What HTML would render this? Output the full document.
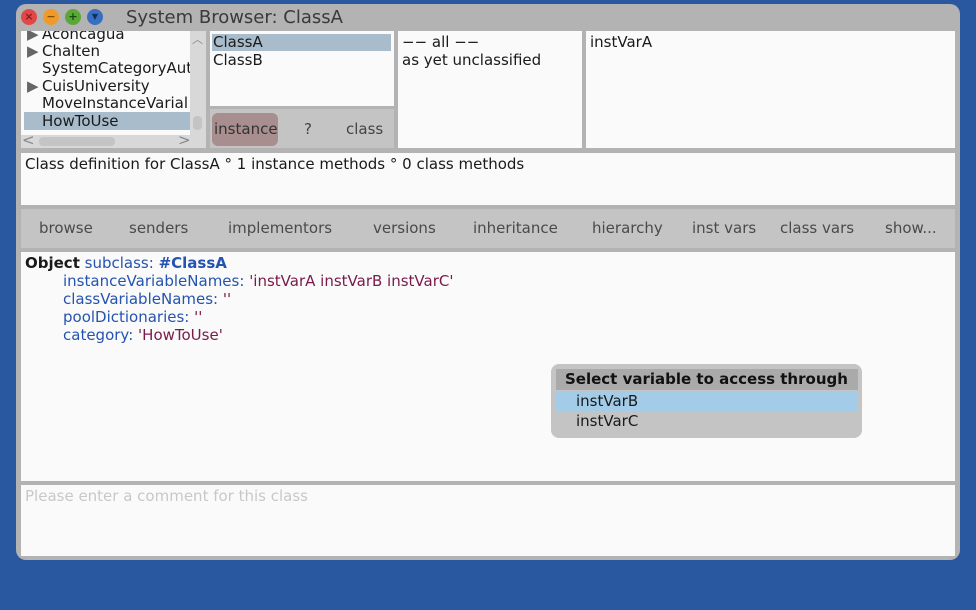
<!DOCTYPE html>
<html><head><style>
*{margin:0;padding:0;box-sizing:border-box}
body{width:976px;height:610px;background:#2a58a0;font-family:"DejaVu Sans","Liberation Sans",sans-serif;font-size:15px;color:#1a1a1a;position:relative;overflow:hidden}
.a{position:absolute}
.w{background:#fafafa}
.win{left:16px;top:4px;width:944px;height:556px;background:#b3b3b3;border-radius:10px}
.dot{width:16px;height:16px;border-radius:50%;top:9px;font-size:11px;line-height:16px;text-align:center;font-weight:bold}
.t{position:absolute;white-space:nowrap;line-height:18px}
.btn{top:219px;color:#4a4a4a;font-size:15px}
.b{color:#2553b0}.s{color:#7a1a4a}
</style></head><body>
<div class="a win"></div>
<div class="a dot" style="left:21px;background:#e04848;color:#8a1a1a">×</div>
<div class="a dot" style="left:43px;background:#ef9b2a;color:#8a4a00">−</div>
<div class="a dot" style="left:65px;background:#5aa838;color:#1a4a10">+</div>
<div class="a dot" style="left:87px;background:#3a6ec0;color:#10305a;font-size:8px">▼</div>
<div class="t" style="left:126px;top:7px;font-size:18px;line-height:22px;color:#3a3a3a">System Browser: ClassA</div>

<!-- pane 1 -->
<div class="a w" style="left:21px;top:31px;width:169px;height:104px;overflow:hidden">
<div class="a" style="left:3px;top:81px;width:166px;height:18px;background:#a9bccb"></div>
<div class="t" style="left:6px;top:-6px;color:#666">▶</div><div class="t" style="left:21px;top:-6px">Aconcagua</div>
<div class="t" style="left:6px;top:11px;color:#666">▶</div><div class="t" style="left:21px;top:11px">Chalten</div>
<div class="t" style="left:21px;top:28px">SystemCategoryAut</div>
<div class="t" style="left:6px;top:46px;color:#666">▶</div><div class="t" style="left:21px;top:46px">CuisUniversity</div>
<div class="t" style="left:21px;top:63px">MoveInstanceVarial</div>
<div class="t" style="left:21px;top:81px">HowToUse</div>
</div>
<div class="a" style="left:190px;top:31px;width:16px;height:117px;background:#d8d8d8"></div>
<div class="t" style="left:192px;top:31px;color:#888;font-size:11px">︿</div>
<div class="a" style="left:193px;top:116px;width:9px;height:14px;background:#c4c4c4;border-radius:4px"></div>
<div class="a" style="left:21px;top:135px;width:169px;height:13px;background:#d8d8d8"></div>
<div class="a" style="left:39px;top:137px;width:76px;height:9px;background:#c4c4c4;border-radius:4px"></div>
<div class="t" style="left:22px;top:131px;color:#888">&lt;</div>
<div class="t" style="left:178px;top:131px;color:#888">&gt;</div>

<!-- pane 2 -->
<div class="a w" style="left:210px;top:31px;width:184px;height:75px"></div>
<div class="a" style="left:212px;top:34px;width:179px;height:17px;background:#a9bccb"></div>
<div class="t" style="left:213px;top:33px">ClassA</div>
<div class="t" style="left:213px;top:51px">ClassB</div>
<div class="a" style="left:210px;top:109px;width:184px;height:39px;background:#c4c4c4"></div>
<div class="a" style="left:212px;top:113px;width:66px;height:33px;background:#a88e8e;border-radius:6px"></div>
<div class="t" style="left:214px;top:120px;font-size:15px;color:#333">instance</div>
<div class="t" style="left:304px;top:120px;font-size:15px;color:#444">?</div>
<div class="t" style="left:346px;top:120px;font-size:15px;color:#444">class</div>

<!-- pane 3,4 -->
<div class="a w" style="left:398px;top:31px;width:184px;height:117px"></div>
<div class="t" style="left:402px;top:33px">−− all −−</div>
<div class="t" style="left:402px;top:51px">as yet unclassified</div>
<div class="a w" style="left:586px;top:31px;width:369px;height:117px"></div>
<div class="t" style="left:590px;top:33px">instVarA</div>

<!-- def -->
<div class="a w" style="left:21px;top:153px;width:934px;height:52px"></div>
<div class="t" style="left:25px;top:155px">Class definition for ClassA ° 1 instance methods ° 0 class methods</div>

<div class="a" style="left:21px;top:209px;width:934px;height:39px;background:#c4c4c4"></div>
<div class="t btn" style="left:39px">browse</div>
<div class="t btn" style="left:129px">senders</div>
<div class="t btn" style="left:228px">implementors</div>
<div class="t btn" style="left:373px">versions</div>
<div class="t btn" style="left:473px">inheritance</div>
<div class="t btn" style="left:592px">hierarchy</div>
<div class="t btn" style="left:692px">inst vars</div>
<div class="t btn" style="left:780px">class vars</div>
<div class="t btn" style="left:885px">show...</div>

<!-- code -->
<div class="a w" style="left:21px;top:252px;width:934px;height:229px"></div>
<div class="t" style="left:25px;top:254px"><b>Object</b> <span class="b">subclass: <b>#ClassA</b></span></div>
<div class="t" style="left:63px;top:272px"><span class="b">instanceVariableNames:</span> <span class="s">'instVarA instVarB instVarC'</span></div>
<div class="t" style="left:63px;top:290px"><span class="b">classVariableNames:</span> <span class="s">''</span></div>
<div class="t" style="left:63px;top:308px"><span class="b">poolDictionaries:</span> <span class="s">''</span></div>
<div class="t" style="left:63px;top:326px"><span class="b">category:</span> <span class="s">'HowToUse'</span></div>

<div class="a" style="left:551px;top:364px;width:311px;height:74px;background:#c4c4c4;border-radius:8px"></div>
<div class="a" style="left:556px;top:369px;width:302px;height:21px;background:#aaaaaa"></div>
<div class="t" style="left:565px;top:370px;font-weight:bold;color:#111">Select variable to access through</div>
<div class="a" style="left:556px;top:391px;width:302px;height:20px;background:#a2cce8"></div>
<div class="t" style="left:576px;top:392px">instVarB</div>
<div class="t" style="left:576px;top:412px">instVarC</div>

<div class="a w" style="left:21px;top:485px;width:934px;height:71px"></div>
<div class="t" style="left:25px;top:487px;color:#c8c8c8">Please enter a comment for this class</div>
</body></html>
